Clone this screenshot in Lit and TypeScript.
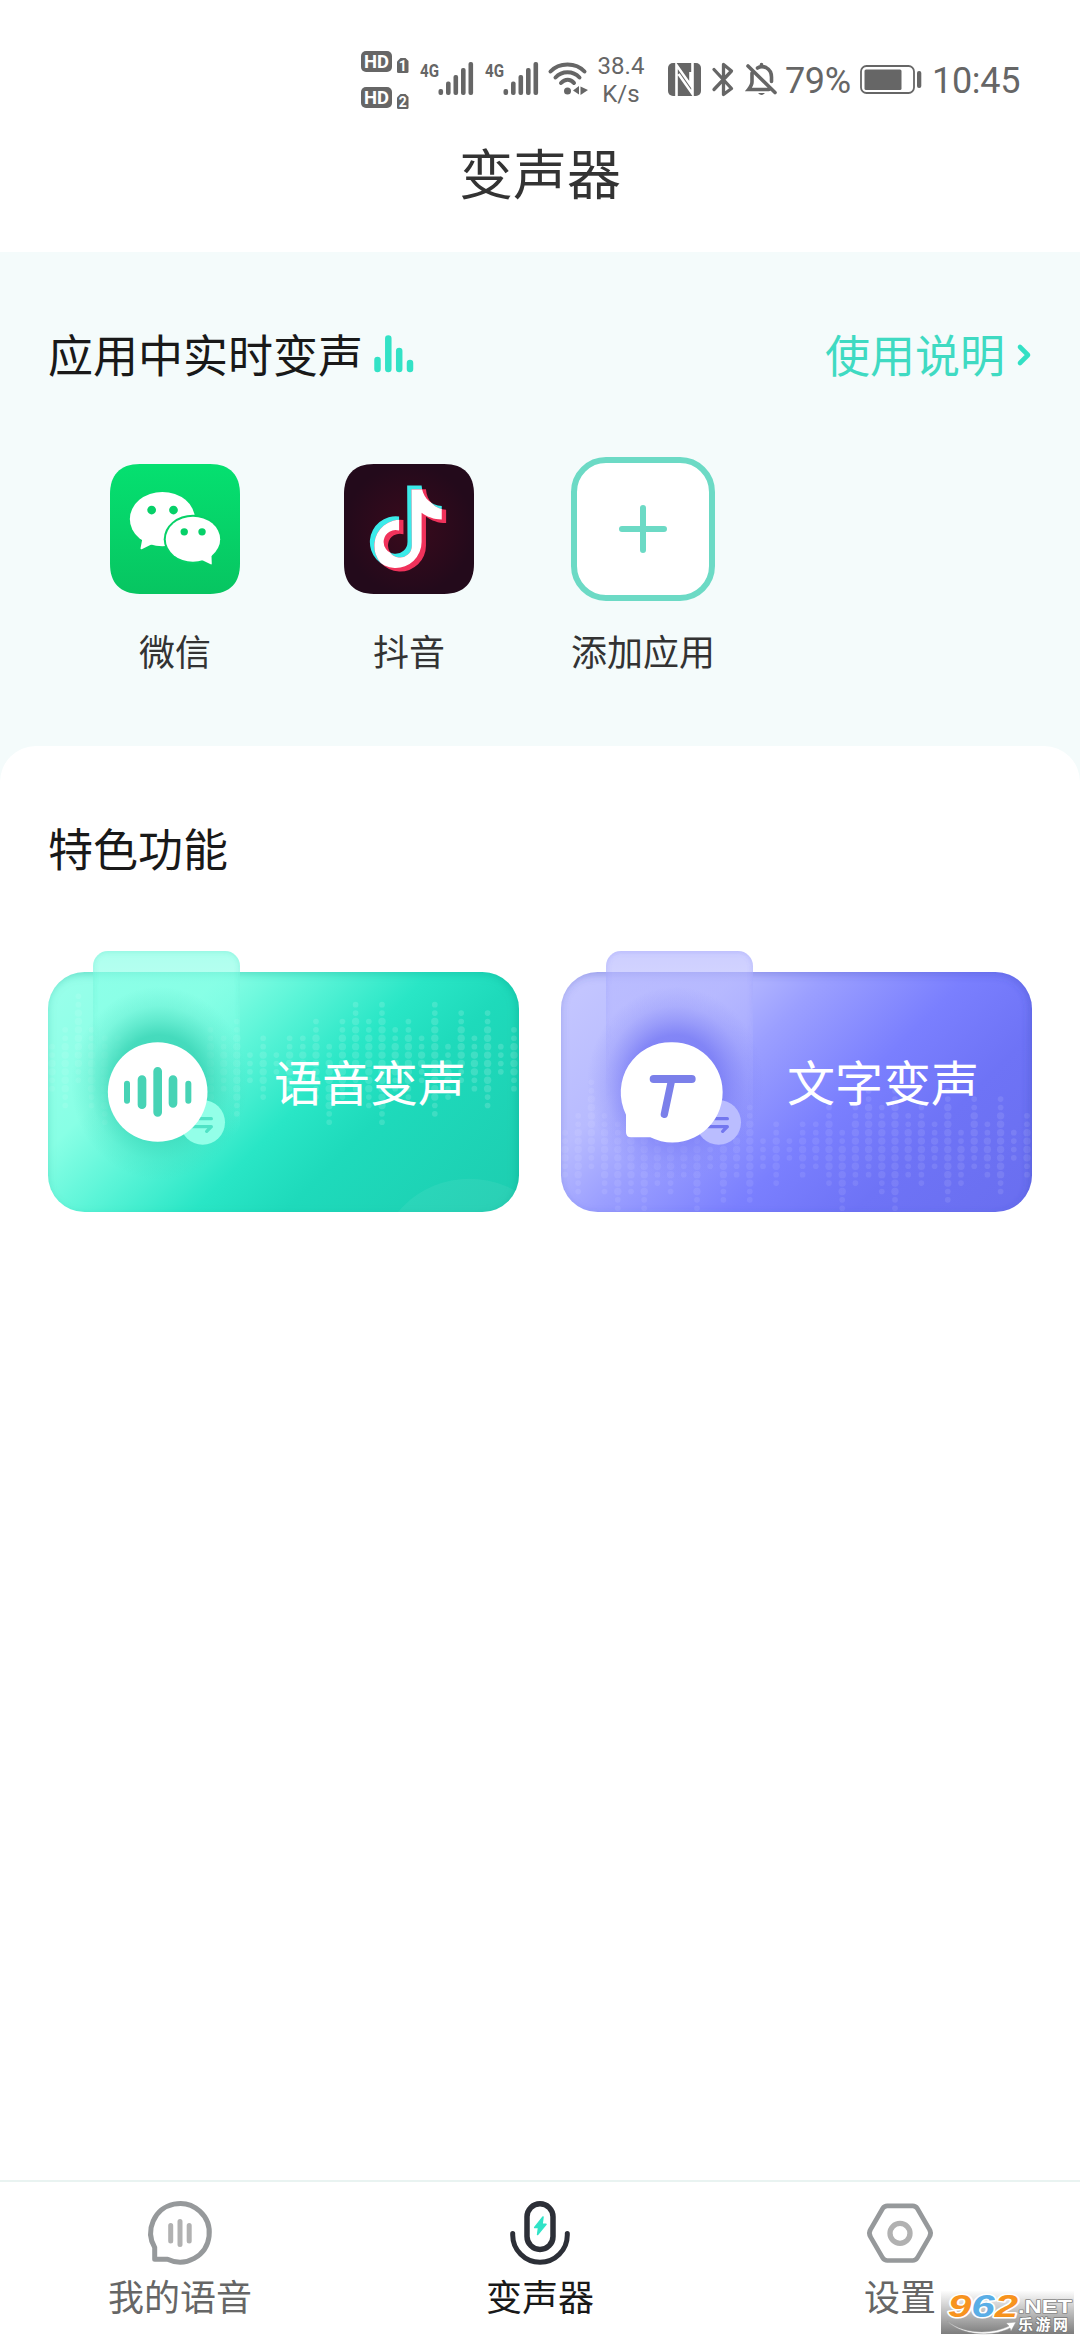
import { LitElement, html, css, svg } from "lit";
import { customElement, property } from "lit/decorators.js";

const signalBars = [
  [2.5, 27], [10, 19.5], [17.5, 13], [25, 6], [32.5, 0],
];

/* First and last dot row of each equalizer column, left to right. */
const waveColumns: [number, number][] = [
  [5, 10], [3, 12], [-1, 9], [3, 12], [4, 14], [4, 12], [4, 14], [5, 11], [4, 12],
  [5, 10], [5, 14], [6, 9], [3, 13], [4, 10], [2, 13], [6, 9], [4, 11], [6, 8],
  [4, 10], [4, 9], [2, 11], [5, 14], [2, 11], [0, 10], [2, 12], [0, 14], [3, 10],
  [2, 11], [4, 9], [0, 13], [5, 11], [1, 9], [4, 10], [1, 12], [5, 8], [3, 10],
];

@customElement("status-bar")
class StatusBar extends LitElement {
  static styles = css`
    :host { display: block; height: 130px; color: #666; font-family: Roboto, sans-serif; }
    .row { display: flex; align-items: flex-start; padding: 51px 0 0 361px; }
    svg { display: block; flex: none; overflow: visible; }
    .hd { margin-right: 11px; }
    .signal { margin-top: 11px; margin-right: 11px; }
    .wifi { margin-top: 11px; margin-left: -2px; }
    .speed { width: 66px; text-align: center; font-size: 24px; line-height: 28px; margin-top: 1px; }
    .nfc { margin: 12px 0 0 14px; }
    .bt { margin: 11px 0 0 11px; }
    .bell { margin: 12px 0 0 12px; }
    .pct, .time { font-size: 36px; line-height: 42px; margin-top: 9px; white-space: nowrap; }
    .pct { width: 77px; margin-left: 7px; letter-spacing: -0.4px; }
    .time { margin-left: 10px; letter-spacing: -0.3px; }
    .battery { margin-top: 14px; margin-left: -2px; }
    .badge { font: 700 19px Roboto, sans-serif; fill: #fff; }
    .sim { font: 700 14px Roboto, sans-serif; fill: #fff; }
    .net { font: 700 19px "Roboto", sans-serif; fill: #666; }
  `;

  private signal() {
    return html`<svg class="signal" width="54" height="34" viewBox="0 0 54 34">
      <text class="net" x="0" y="15" textLength="19" lengthAdjust="spacingAndGlyphs">4G</text>
      ${signalBars.map(([x, y]) => svg`<rect x=${x + 16} y=${y} width="4.6" height=${33 - y} rx="2" fill="#666"></rect>`)}
    </svg>`;
  }

  private hd(y: number, n: string) {
    return svg`<g transform="translate(0 ${y})">
      <rect width="31" height="21" rx="5" fill="#666"></rect>
      <text class="badge" x="3" y="17.3" textLength="25" lengthAdjust="spacingAndGlyphs">HD</text>
      <path d="M39.500 7h5l3 3v10.500q0 1.500-1.500 1.500h-8.500q-1.500 0-1.500-1.500v-10z" fill="#666"></path>
      <text class="sim" x="37.700" y="19.500">${n}</text>
    </g>`;
  }

  render() {
    return html`<div class="row">
      <svg class="hd" width="48" height="58" viewBox="0 0 48 58">${this.hd(0, "1")}${this.hd(36, "2")}</svg>
      ${this.signal()}${this.signal()}
      <svg class="wifi" width="40" height="34" viewBox="0 0 40 34" fill="none" stroke="#666" stroke-width="4" stroke-linecap="round">
        <path d="M2.500 9.500C11 0 28 0 36.500 9.500M7.500 15.500C14 8.500 25 8.500 31.500 15.500M13 21C17 16.500 22.500 16.500 26 21"></path>
        <circle cx="19.500" cy="29" r="3.500" fill="#666" stroke="none"></circle>
        <path d="M31 24v8.500l-6-4zM32.500 33v-8.500l7.500 3.500z" fill="#666" stroke="none"></path>
      </svg>
      <div class="speed">38.4<br />K/s</div>
      <svg class="nfc" width="33" height="33" viewBox="0 0 33 33">
        <rect width="33" height="33" rx="5" fill="#666"></rect>
        <path d="M8.500 33V2L22.500 22V9M10.500 11L24.500 31V0" fill="none" stroke="#fff" stroke-width="2.600"></path>
      </svg>
      <svg class="bt" width="22" height="35" viewBox="0 0 22 35">
        <path d="M2 7.500L19.500 26.500L11.500 32.500V2.500L19.500 9L2 27.500" fill="none" stroke="#666" stroke-width="3.300" stroke-linejoin="round" stroke-linecap="round"></path>
      </svg>
      <svg class="bell" width="32" height="34" viewBox="0 0 32 34" fill="none" stroke="#666" stroke-width="3.600" stroke-linecap="round">
        <path d="M6 10V19Q6 22 2.500 26.500H23M11.500 5Q15 2.500 20 4.500Q25.500 7.500 25.500 14V18.500M15.500 3V1.500M2 3L29 29.500"></path>
        <path d="M12 30h7q-3.500 4-7 0z" fill="#666" stroke="none"></path>
      </svg>
      <div class="pct">79%</div>
      <svg class="battery" width="62" height="29" viewBox="0 0 62 29">
        <rect x="1" y="1" width="53" height="27" rx="5.500" fill="none" stroke="#666" stroke-width="1.800"></rect>
        <rect x="4.500" y="4.500" width="37" height="20.500" rx="1.500" fill="#666"></rect>
        <rect x="57" y="6" width="4.300" height="17" rx="2" fill="#666"></rect>
      </svg>
      <div class="time">10:45</div>
    </div>`;
  }
}

@customElement("feature-card")
class FeatureCard extends LitElement {
  @property() kind: "voice" | "text" = "voice";
  @property() label = "";

  static styles = css`
    :host { display: grid; width: 471px; height: 261px; }
    .art { grid-area: 1 / 1; display: block; overflow: visible; }
    .label {
      grid-area: 1 / 1; align-self: start; justify-self: start;
      margin: 96px 0 0 226px; font-size: 48px; line-height: 66px; color: #fff; z-index: 1;
    }
  `;

  render() {
    const voice = this.kind === "voice";
    const stops = voice
      ? [[0, "#9bffeb"], [0.25, "#88ffe5"], [0.38, "#5df5d8"], [0.54, "#29e6c6"], [0.67, "#1edabb"], [1, "#1dcdb0"]]
      : [[0, "#c6c8ff"], [0.25, "#b8bbff"], [0.38, "#9b9fff"], [0.58, "#7a7ffe"], [0.75, "#6e73f6"], [1, "#696eef"]];
    const tab = voice ? "#86ffe6" : "#b5b7ff";
    const glow = voice ? "#3ad5b6" : "#7a7df5";
    const edge = voice ? "#0f9c84" : "#3c44b8";
    const small = voice ? "#93ffe8" : "#babdff";
    const mark = voice ? "#50e3c6" : "#7377ef";
    const shift = voice ? 0 : 9;
    const top = voice ? 224 : 482;
    /* Artwork units are thirds of a pixel, with the origin shared by both cards. */
    return html`
      <svg class="art" width="471" height="261" viewBox="54 63 1413 783">
        <defs>
          <linearGradient id="bg" gradientUnits="userSpaceOnUse" x1="54" y1="126" x2="1119" y2="1191">
            ${stops.map(([o, c]) => svg`<stop offset=${o} stop-color=${c}></stop>`)}
          </linearGradient>
          <linearGradient id="tab" x1="0" y1="0" x2="0" y2="1">
            <stop offset="0" stop-color=${tab} stop-opacity=".68"></stop>
            <stop offset=".35" stop-color=${tab} stop-opacity=".5"></stop>
            <stop offset="1" stop-color=${tab} stop-opacity="0"></stop>
          </linearGradient>
          <linearGradient id="dots" gradientUnits="userSpaceOnUse" x1="54" y1="0" x2="1467" y2="0">
            <stop offset="0" stop-color="#fff" stop-opacity=".08"></stop>
            <stop offset=".5" stop-color="#fff" stop-opacity=${voice ? 0.12 : 0.08}></stop>
            <stop offset="1" stop-color="#fff" stop-opacity=${voice ? 0.16 : 0.1}></stop>
          </linearGradient>
          <radialGradient id="glow">
            <stop offset="0" stop-color=${glow}></stop>
            <stop offset=".5" stop-color=${glow} stop-opacity=".85"></stop>
            <stop offset=".65" stop-color=${glow} stop-opacity=".5"></stop>
            <stop offset=".8" stop-color=${glow} stop-opacity=".2"></stop>
            <stop offset="1" stop-color=${glow} stop-opacity="0"></stop>
          </radialGradient>
          <filter id="soft" x="-10%" y="-10%" width="120%" height="120%"><feGaussianBlur stdDeviation="14"></feGaussianBlur></filter>
          <filter id="softTab" x="-20%" y="-20%" width="140%" height="140%"><feGaussianBlur stdDeviation="8"></feGaussianBlur></filter>
          <clipPath id="card"><rect x="54" y="126" width="1413" height="720" rx="110"></rect></clipPath>
          <clipPath id="tabClip"><rect x="189" y="63" width="441" height="560" rx="45"></rect></clipPath>
          <linearGradient id="fade" x1="0" y1="0" x2="0" y2="1">
            <stop offset="0" stop-color="#fff"></stop><stop offset=".8" stop-color="#000"></stop>
          </linearGradient>
          <mask id="tabMask" maskUnits="userSpaceOnUse" x="150" y="40" width="520" height="620"><rect x="150" y="40" width="520" height="620" fill="url(#fade)"></rect></mask>
        </defs>
        <g clip-path="url(#card)">
          <rect x="54" y="126" width="1413" height="720" fill="url(#bg)"></rect>
          ${voice ? svg`<circle cx="1318" cy="1025" r="279" fill="#fff" fill-opacity=".06"></circle>` : null}
          <g fill="url(#dots)">
            ${waveColumns.map(([a, b], i) =>
              Array.from({ length: b - a + 1 }, (_, k) => {
                const size = Math.min(k, b - a - k) > 1 ? 11 : 8.5;
                return svg`<circle cx=${66 + i * 39.6} cy=${top + (a + k) * 25.2} r=${size}></circle>`;
              }),
            )}
          </g>
          <rect x="34" y="116" width="1443" height="756" rx="118" fill="none" stroke=${edge} stroke-opacity=".38" stroke-width="30" filter="url(#soft)"></rect>
        </g>
        <rect x="189" y="63" width="441" height="560" rx="45" fill="url(#tab)"></rect>
        <g clip-path="url(#tabClip)"><g mask="url(#tabMask)">
          <rect x="186" y="60" width="447" height="620" rx="47" fill="none" stroke=${glow} stroke-opacity=".35" stroke-width="10" filter="url(#softTab)"></rect>
        </g></g>
        <ellipse cx=${388 + shift} cy="460" rx="265" ry="290" fill="url(#glow)"></ellipse>
        <circle cx=${518 + shift} cy="577" r="67" fill=${small}></circle>
        <path d="M${490 + shift} 566H${544 + shift}M${480 + shift} 590H${544 + shift}L${530 + shift} 604"
          fill="none" stroke=${mark} stroke-width="10" stroke-linecap="round" stroke-linejoin="round"></path>
        ${voice
          ? svg`<circle cx="383" cy="486" r="149.500" fill="#fff"></circle>
            <g stroke="#47d3b5" stroke-linecap="round">
              <path d="M291 461V512M475 461V512" stroke-width="18"></path>
              <path d="M336 449V524M383 424V547M429 449V520" stroke-width="26"></path>
            </g>`
          : svg`<path d="M386 336.500A150.500 150.500 0 1 1 322 622H264Q249 622 249 607V554A150.500 150.500 0 0 1 386 336.500Z" fill="#fff"></path>
            <g stroke="#7b80ea" stroke-linecap="round" fill="none">
              <path d="M332 447H446" stroke-width="24"></path>
              <path d="M386 449L364 553" stroke-width="22"></path>
            </g>`}
      </svg>
      <div class="label">${this.label}</div>`;
  }
}

const wechatIcon = html`<svg width="130" height="130" viewBox="31 43 387 387">
  <defs><linearGradient id="wx" x1="0" y1="0" x2="0" y2="1">
    <stop offset="0" stop-color="#05e070"></stop><stop offset="1" stop-color="#07c561"></stop>
  </linearGradient></defs>
  <path d="M120 43H329C390 43 418 78 418 132V341C418 395 390 430 329 430H120C59 430 31 395 31 341V132C31 78 59 43 120 43Z" fill="url(#wx)"></path>
  <ellipse cx="187" cy="207" rx="97" ry="81" fill="#fff"></ellipse>
  <path d="M128 262L122 293Q121 299 127 296L157 281Z" fill="#fff"></path>
  <ellipse cx="278" cy="267" rx="87" ry="73" fill="#06d167"></ellipse>
  <ellipse cx="278" cy="267" rx="81" ry="67" fill="#fff"></ellipse>
  <path d="M333 312L334 339Q334 344 329 341L303 328Z" fill="#fff"></path>
  <g fill="#06d068"><circle cx="155" cy="180" r="13"></circle><circle cx="220" cy="180" r="13"></circle>
  <circle cx="252" cy="245" r="11"></circle><circle cx="305" cy="245" r="11"></circle></g>
</svg>`;

const note = "M922 107H965C967 143 993 166 1025 168V208C1002 208 981 200 965 188V275A77 77 0 1 1 898 199V241A35.500 35.500 0 1 0 923 275Z";
const douyinIcon = html`<svg width="130" height="130" viewBox="734 43 387 387">
  <defs>
    <radialGradient id="dy"><stop offset="0" stop-color="#3a0a1c"></stop><stop offset="1" stop-color="#230a1b"></stop></radialGradient>
    <clipPath id="dyClip"><path d=${note} transform="translate(13 11)"></path></clipPath>
  </defs>
  <path d="M823 43H1032C1093 43 1121 78 1121 132V341C1121 395 1093 430 1032 430H823C762 430 734 395 734 341V132C734 78 762 43 823 43Z" fill="url(#dy)"></path>
  <path d=${note} fill="#3bebea"></path>
  <path d=${note} transform="translate(13 11)" fill="#f0325b"></path>
  <g clip-path="url(#dyClip)"><path d=${note} fill="#fff"></path></g>
</svg>`;

const plusIcon = html`<svg width="144" height="144" viewBox="0 0 144 144">
  <rect x="3" y="3" width="138" height="138" rx="32" fill="#fff" stroke="#6cdac5" stroke-width="6"></rect>
  <path d="M72 51V93M51 72H93" stroke="#6cdac5" stroke-width="6" stroke-linecap="round"></path>
</svg>`;

const chatIcon = html`<svg width="64" height="64" viewBox="0 0 64 64" fill="none" stroke-linecap="round">
  <path d="M6.700 46V57.700H19.500A29.300 29.300 0 1 0 6.700 46Z" transform="translate(0 .6)" stroke="#96999b" stroke-width="5" stroke-linejoin="round"></path>
  <path d="M22.700 24.500V40M32 20.500V43.500M41.200 24.500V40" stroke="#b1b1b1" stroke-width="5"></path>
</svg>`;

const micIcon = html`<svg width="64" height="64" viewBox="0 0 64 64" fill="none" stroke="#2c2f37" stroke-linecap="round">
  <rect x="19" y="2.800" width="26" height="45.600" rx="13" stroke-width="5.500"></rect>
  <path d="M4.700 32.500V34A27.300 27.300 0 0 0 59.300 34V32.500" stroke-width="5"></path>
  <path d="M35 16L26.700 26.500H30.600L29.600 33.500L38 23.300H34Z" fill="#30e3c7" stroke="#30e3c7" stroke-width="1.600" stroke-linejoin="round"></path>
</svg>`;

const hexIcon = html`<svg width="66" height="61" viewBox="261 128 198 182" fill="none">
  <path d="M322 136H398Q407 136 412 144L448 206Q456 218 448 230L412 292Q407 300 398 300H322Q313 300 308 292L272 230Q264 218 272 206L308 144Q313 136 322 136Z" stroke="#96999b" stroke-width="14"></path>
  <circle cx="360" cy="218.500" r="30" stroke="#b1b1b1" stroke-width="16"></circle>
</svg>`;

@customElement("app-root")
class AppRoot extends LitElement {
  static styles = css`
    :host {
      display: flex; flex-direction: column; position: relative; width: 1080px; height: 2340px;
      background: #fff; overflow: hidden; font-family: "Noto Sans CJK SC", sans-serif; color: #191919;
    }
    svg { display: block; flex: none; overflow: visible; }
    .title { height: 122px; text-align: center; font-size: 54px; line-height: 83px; color: #333; }
    .live { height: 530px; background: #f4fbfb; }
    .head { display: flex; align-items: center; padding: 69px 48px 0; height: 66px; font-size: 45px; line-height: 66px; }
    .bars { margin: 0 auto 0 11px; }
    .guide { color: #3fdac2; }
    .arrow { margin-left: 12px; margin-top: 1px; }
    .apps { display: flex; padding: 70px 58px 0; }
    .app { width: 234px; display: flex; flex-direction: column; align-items: center; }
    .icon { height: 144px; display: flex; align-items: center; }
    .name { margin-top: 24px; font-size: 36px; line-height: 50px; color: #333; }
    .panel { flex: 1; margin-top: -36px; border-radius: 36px 36px 0 0; background: #fff; padding: 69px 48px 0; }
    .sub { font-size: 45px; line-height: 66px; }
    .cards { display: flex; gap: 42px; margin-top: 70px; }
    .nav { display: flex; height: 160px; border-top: 2px solid #e9f3f1; box-sizing: border-box; }
    .tab { flex: 1; display: flex; flex-direction: column; align-items: center; color: #666; font-size: 36px; }
    .glyph { height: 64px; margin-top: 19px; display: flex; align-items: center; }
    .text { line-height: 50px; margin-top: 5px; }
    .active { color: #191919; }
    .mark { position: absolute; left: 941px; top: 2291px; }
    .num { font: italic 700 32px "Liberation Sans", sans-serif; }
    .net { font: 700 19px "Liberation Sans", sans-serif; }
    .cn { font: 700 15px "Noto Sans CJK SC", sans-serif; }
  `;

  private app(icon: unknown, name: string) {
    return html`<div class="app"><div class="icon">${icon}</div><div class="name">${name}</div></div>`;
  }

  private tab(icon: unknown, name: string, active = false) {
    return html`<div class="tab ${active ? "active" : ""}"><div class="glyph">${icon}</div><div class="text">${name}</div></div>`;
  }

  render() {
    return html`
      <status-bar></status-bar>
      <div class="title">变声器</div>
      <div class="live">
        <div class="head">
          <span>应用中实时变声</span>
          <svg class="bars" width="39" height="38" viewBox="0 0 39 38">
            <path d="M3.500 25V34M14.300 3.500V34M25.200 16V34M36 28V34" stroke="#33e2c6" stroke-width="6.500" stroke-linecap="round"></path>
          </svg>
          <span class="guide">使用说明</span>
          <svg class="arrow" width="15" height="22" viewBox="0 0 15 22">
            <path d="M3 3L11 11L3 19" fill="none" stroke="#33e0c4" stroke-width="4.600" stroke-linecap="round" stroke-linejoin="round"></path>
          </svg>
        </div>
        <div class="apps">
          ${this.app(wechatIcon, "微信")}${this.app(douyinIcon, "抖音")}${this.app(plusIcon, "添加应用")}
        </div>
      </div>
      <div class="panel">
        <div class="sub">特色功能</div>
        <div class="cards">
          <feature-card kind="voice" label="语音变声"></feature-card>
          <feature-card kind="text" label="文字变声"></feature-card>
        </div>
      </div>
      <div class="nav">
        ${this.tab(chatIcon, "我的语音")}${this.tab(micIcon, "变声器", true)}${this.tab(hexIcon, "设置")}
      </div>
      <svg class="mark" width="133" height="43" viewBox="0 0 133 43">
        <defs><linearGradient id="wm" x1="0" y1="0" x2="0" y2="1">
          <stop offset="0" stop-color="#fdfdfd"></stop><stop offset="1" stop-color="#7d7d7d"></stop>
        </linearGradient></defs>
        <rect width="133" height="43" fill="url(#wm)"></rect>
        <path d="M6 30C22 43 50 44 68 35L65 32L75 31L70 40L69 37C50 47 20 44 6 30Z" fill="#fff" stroke="#999" stroke-width=".5"></path>
        <g paint-order="stroke" stroke-linejoin="round">
          <text class="num" x="7" y="26" textLength="70" lengthAdjust="spacingAndGlyphs" stroke="#fff" stroke-width="3" fill="#f7931e">9<tspan fill="#5aaee6">6</tspan>2</text>
          <text class="net" x="77" y="22" textLength="54" lengthAdjust="spacingAndGlyphs" stroke="#888" stroke-width="1.500" fill="#fff">.NET</text>
          <text class="cn" x="77" y="38.500" textLength="50" stroke="#777" stroke-width="1.500" fill="#fff">乐游网</text>
        </g>
      </svg>`;
  }
}
